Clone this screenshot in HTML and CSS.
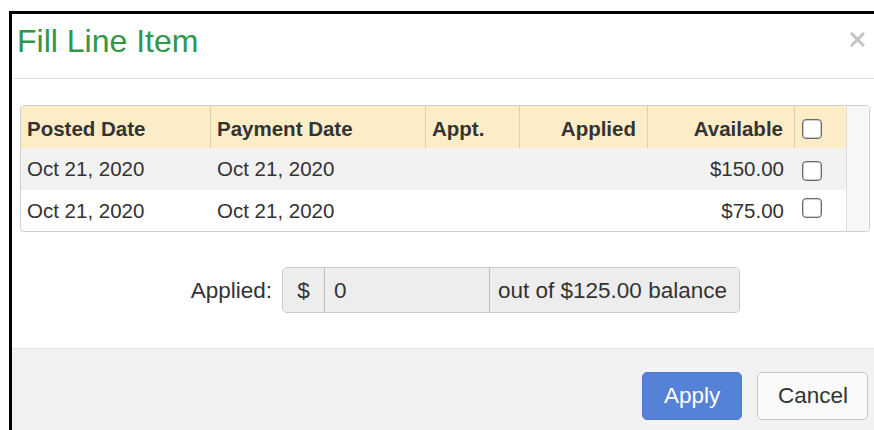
FILE: index.html
```html
<!DOCTYPE html>
<html lang="en">
<head>
<meta charset="utf-8">
<title>Fill Line Item</title>
<link rel="stylesheet" href="styles.css">
</head>
<body>
<div class="backdrop">
  <div class="modal">
    <div class="modal-header">
      <h4 class="modal-title">Fill Line Item</h4>
      <button class="close" type="button" aria-label="Close">
        <svg width="15" height="15" viewBox="0 0 15 15"><path d="M2 2 L13 13 M13 2 L2 13" stroke="currentColor" stroke-width="3" stroke-linecap="square" fill="none"/></svg>
      </button>
    </div>

    <div class="modal-body">
      <div class="grid">
        <table class="payments">
          <colgroup>
            <col class="c-posted">
            <col class="c-payment">
            <col class="c-appt">
            <col class="c-applied">
            <col class="c-available">
            <col class="c-check">
          </colgroup>
          <thead>
            <tr>
              <th>Posted Date</th>
              <th>Payment Date</th>
              <th>Appt.</th>
              <th class="num">Applied</th>
              <th class="num">Available</th>
              <th class="chk-cell"><span class="chk"></span></th>
            </tr>
          </thead>
          <tbody>
            <tr class="odd">
              <td>Oct 21, 2020</td>
              <td>Oct 21, 2020</td>
              <td></td>
              <td class="num"></td>
              <td class="num">$150.00</td>
              <td class="chk-cell"><span class="chk"></span></td>
            </tr>
            <tr>
              <td>Oct 21, 2020</td>
              <td>Oct 21, 2020</td>
              <td></td>
              <td class="num"></td>
              <td class="num">$75.00</td>
              <td class="chk-cell"><span class="chk"></span></td>
            </tr>
          </tbody>
        </table>
        <div class="gutter"></div>
      </div>

      <div class="form-row">
        <label class="form-label" for="applied">Applied:</label>
        <div class="input-group">
          <span class="addon addon-cur">$</span>
          <input class="amount" id="applied" type="text" value="0" readonly>
          <span class="addon addon-bal">out of $125.00 balance</span>
        </div>
      </div>
    </div>

    <div class="modal-footer">
      <button class="btn btn-primary" type="button">Apply</button>
      <button class="btn btn-default" type="button">Cancel</button>
    </div>
  </div>
</div>
</body>
</html>
```

FILE: styles.css
```css
html, body {
  margin: 0;
  padding: 0;
  background: #fff;
  overflow: hidden;
}

body {
  font-family: "Liberation Sans", Arial, Helvetica, sans-serif;
  color: #333;
}

.backdrop {
  padding: 11px 0 0 9px;
  height: 419px;
}

/* dialog box, drawn with a heavy top/left frame */
.modal {
  border-top: 3px solid #000;
  border-left: 3px solid #000;
  background: #fff;
  height: 416px;
  display: flex;
  flex-direction: column;
}

/* header */
.modal-header {
  display: flex;
  justify-content: space-between;
  align-items: flex-start;
  padding: 9px 9px 0 5px;
  border-bottom: 1px solid #e5e5e5;
  box-sizing: content-box;
  height: 55px;
}

.modal-title {
  margin: 0;
  font-size: 32px;
  line-height: 36px;
  font-weight: normal;
  color: #31964a;
}

.close {
  margin: 9px 0 0;
  padding: 0;
  border: 0;
  background: none;
  color: #c4c4c4;
  width: 15px;
  height: 15px;
  display: block;
}
.close svg { display: block; }

/* body */
.modal-body {
  padding: 26px 4px 35px 8px;
}

.grid {
  display: flex;
  border: 1px solid #cfcfcf;
  border-radius: 4px;
  overflow: hidden;
}

.payments {
  width: 825px;
  table-layout: fixed;
  border-collapse: separate;
  border-spacing: 0;
  font-size: 20.5px;
}

.c-posted { width: 190px; }
.c-payment { width: 215px; }
.c-appt { width: 94px; }
.c-applied { width: 128px; }
.c-available { width: 147px; }
.c-check { width: 51px; }

.payments th,
.payments td {
  padding: 0 10px 0 6px;
  text-align: left;
  white-space: nowrap;
  color: #333;
}

.payments th {
  height: 42px;
  padding-top: 4px;
  line-height: 38px;
  box-sizing: border-box;
  background: #fdedc6;
  font-weight: bold;
  border-right: 1px solid #dcd0ab;
}
.payments th:last-child {
  border-right: 0;
  border-top-right-radius: 4px;
}

.payments td {
  height: 42px;
  line-height: 42px;
  box-sizing: border-box;
}
.payments tbody tr:last-child td {
  height: 41px;
  line-height: 41px;
}

.payments tr.odd td { background: #f2f2f2; }

.payments .num { text-align: right; padding-right: 11px; }

.payments .chk-cell {
  padding: 0 0 0 7px;
  vertical-align: middle;
  line-height: 0;
}

.chk {
  display: inline-block;
  width: 18px;
  height: 18px;
  border: 1px solid #6a6a6a;
  border-radius: 4px;
  background: #fff;
  box-shadow: inset 0 0 0 0.5px #9a9a9a;
  margin-top: 4px;
}

.gutter {
  flex: 1;
  background: #f7f7f7;
  border-left: 1px solid #dcdcdc;
}

/* applied amount row */
.form-row {
  display: grid;
  grid-template-columns: 262px 458px;
  align-items: center;
  margin-top: 35px;
  font-size: 22.5px;
}

.form-label {
  text-align: right;
  padding-right: 10px;
  padding-top: 2px;
  color: #333;
}

.input-group {
  display: flex;
  height: 46px;
  box-sizing: border-box;
  border: 1px solid #c9c9c9;
  border-radius: 5px;
  background: #ededed;
  overflow: hidden;
}

.addon,
.amount {
  display: block;
  box-sizing: border-box;
  padding-top: 2px;
  line-height: 42px;
  font-family: inherit;
  font-size: 22.5px;
  color: #333;
  background: #ededed;
}

.addon-cur {
  width: 42px;
  text-align: center;
  border-right: 1px solid #bdbdbd;
}

.amount {
  width: 165px;
  height: 44px;
  margin: 0;
  border: 0;
  border-right: 1px solid #bdbdbd;
  padding: 2px 9px 0;
  outline: none;
}

.addon-bal {
  flex: 1;
  padding-left: 8px;
  white-space: nowrap;
}

/* footer */
.modal-footer {
  flex: 1;
  display: flex;
  justify-content: flex-end;
  align-items: flex-start;
  gap: 15px;
  padding: 23px 6px 0 0;
  background: #f2f2f2;
  border-top: 1px solid #e2e2e2;
}

.btn {
  height: 48px;
  box-sizing: border-box;
  margin: 0;
  padding: 0 20px;
  border: 1px solid #c6c6c6;
  border-radius: 5px;
  font-family: inherit;
  font-size: 22.5px;
  line-height: 46px;
}

.btn-primary {
  padding: 0 21px;
  width: 100px;
  background: #5581d7;
  border-color: #4f79cb;
  color: #fff;
}

.btn-default {
  width: 111px;
  background: #fafafa;
  color: #333;
}
```
